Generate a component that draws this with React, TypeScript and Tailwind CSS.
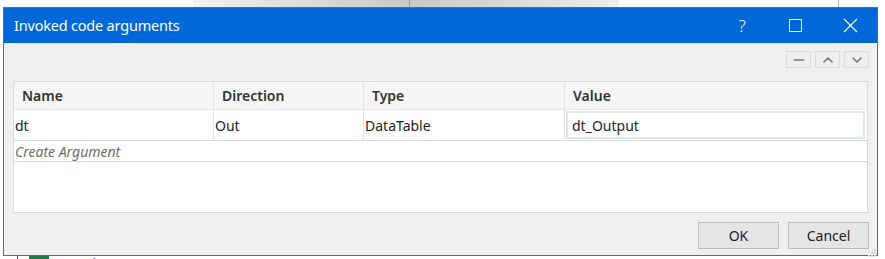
import { Minus, ChevronUp, ChevronDown } from 'lucide-react';

const font = { fontFamily: '"Noto Sans", "Open Sans", sans-serif' };

function ToolButton({ children }: { children: React.ReactNode }) {
    return (
        <div className="w-[25px] h-[17px] border border-[#dcdcdc] bg-[#efefef] flex items-center justify-center text-[#7a7a7a]">
            {children}
        </div>
    );
}

function DialogButton({ label }: { label: string }) {
    return (
        <button className="w-[81px] h-[27px] border border-[#bdbdbd] bg-[#e5e5e5] text-[14px] text-[#1e1e1e] flex items-center justify-center">
            {label}
        </button>
    );
}

export default function App() {
    return (
        <div className="w-[885px] h-[259px] bg-white flex flex-col overflow-hidden" style={font}>

            {/* Background window strip above dialog */}
            <div className="h-[7px] flex shrink-0">
                <div className="w-[193px] bg-white" />
                <div className="w-[216px] bg-gradient-to-r from-[#f2f2f2] to-[#c9c9c9]" />
                <div className="w-[1px] bg-[#9a9a9a]" />
                <div className="w-[209px] bg-gradient-to-r from-[#c9c9c9] to-[#eeeeee]" />
                <div className="w-[219px] bg-white" />
                <div className="w-[1px] bg-[#b5b5b5]" />
                <div className="flex-1 bg-white" />
            </div>

            {/* Dialog */}
            <div className="ml-[3px] w-[875px] h-[249px] shrink-0 border border-[#2a72d6] bg-[#f0f0f0] flex flex-col">

                {/* Title bar */}
                <div className="h-[35px] bg-[#0067d8] flex items-center text-white shrink-0">
                    <span className="ml-[10px] text-[14.5px] tracking-[-0.2px]">Invoked code arguments</span>
                    <div className="ml-auto flex items-center h-full">
                        <span className="w-[12px] mr-[41px] text-center text-[17px] font-light">?</span>
                        <svg width="14" height="14" viewBox="0 0 14 14" className="mr-[40px]">
                            <rect x="0.5" y="0.5" width="12" height="12" fill="none" stroke="white" strokeWidth="1" />
                        </svg>
                        <svg width="15" height="15" viewBox="0 0 15 15" className="mr-[19px]">
                            <path d="M1 1 L14 14 M14 1 L1 14" stroke="white" strokeWidth="1.1" />
                        </svg>
                    </div>
                </div>

                {/* Toolbar */}
                <div className="flex justify-end gap-[4px] pr-[8px] pt-[8px] h-[38px] shrink-0">
                    <ToolButton><Minus size={16} strokeWidth={2.5} /></ToolButton>
                    <ToolButton><ChevronUp size={16} strokeWidth={2.5} /></ToolButton>
                    <ToolButton><ChevronDown size={16} strokeWidth={2.5} /></ToolButton>
                </div>

                {/* Grid */}
                <div className="ml-[9px] w-[855px] h-[132px] border border-[#d5dae0] bg-white flex flex-col text-[14px] text-[#1e1e1e] shrink-0">
                    <div className="h-[28px] bg-[#f5f5f5] border-b border-[#e6e6e6] grid grid-cols-[200px_150px_201px_1fr] font-semibold text-[#333]">
                        <div className="pl-[8px] flex items-center border-r border-[#e3e3e3]">Name</div>
                        <div className="pl-[8px] flex items-center border-r border-[#e3e3e3]">Direction</div>
                        <div className="pl-[8px] flex items-center border-r border-[#e3e3e3]">Type</div>
                        <div className="pl-[8px] flex items-center">Value</div>
                    </div>
                    <div className="h-[31px] border-b border-[#d5dae0] grid grid-cols-[200px_150px_201px_1fr]">
                        <div className="pl-[1px] flex items-center border-r border-[#e3e3e3]">dt</div>
                        <div className="pl-[1px] flex items-center border-r border-[#e3e3e3]">Out</div>
                        <div className="pl-[1px] flex items-center border-r border-[#e3e3e3]">DataTable</div>
                        <div className="p-[1px] pr-[2px] flex">
                            <div className="flex-1 border-2 border-[#e1e6ea] flex items-center pl-[4px]">dt_Output</div>
                        </div>
                    </div>
                    <div className="h-[21px] border-b border-[#d5dae0] flex items-center pl-[1px] italic text-[#6d6d6d]">
                        Create Argument
                    </div>
                    <div className="flex-1" />
                </div>

                {/* Footer buttons */}
                <div className="flex justify-end gap-[9px] pr-[8px] pt-[9px]">
                    <DialogButton label="OK" />
                    <DialogButton label="Cancel" />
                </div>

                {/* Resize grip */}
                <div className="mt-auto mb-[1px] mr-[1px] self-end grid grid-cols-3 gap-[1px]">
                    <span className="w-[2px] h-[2px]" />
                    <span className="w-[2px] h-[2px]" />
                    <span className="w-[2px] h-[2px] bg-[#d8d8d8]" />
                    <span className="w-[2px] h-[2px]" />
                    <span className="w-[2px] h-[2px] bg-[#d8d8d8]" />
                    <span className="w-[2px] h-[2px] bg-[#d8d8d8]" />
                    <span className="w-[2px] h-[2px] bg-[#d8d8d8]" />
                    <span className="w-[2px] h-[2px] bg-[#d8d8d8]" />
                    <span className="w-[2px] h-[2px] bg-[#d8d8d8]" />
                </div>
            </div>

            {/* Background content below dialog */}
            <div className="flex-1 flex items-start overflow-hidden">
                <div className="ml-[17px] w-[1px] h-full bg-[#2a5ea8]" />
                <div className="ml-[11px] w-[20px] h-full bg-[#1f7a45]" />
                <div className="ml-[14px] text-[14px] leading-[14px] text-[#333] mt-[1px] whitespace-nowrap">Excel Process Scope</div>
            </div>
        </div>
    );
}
